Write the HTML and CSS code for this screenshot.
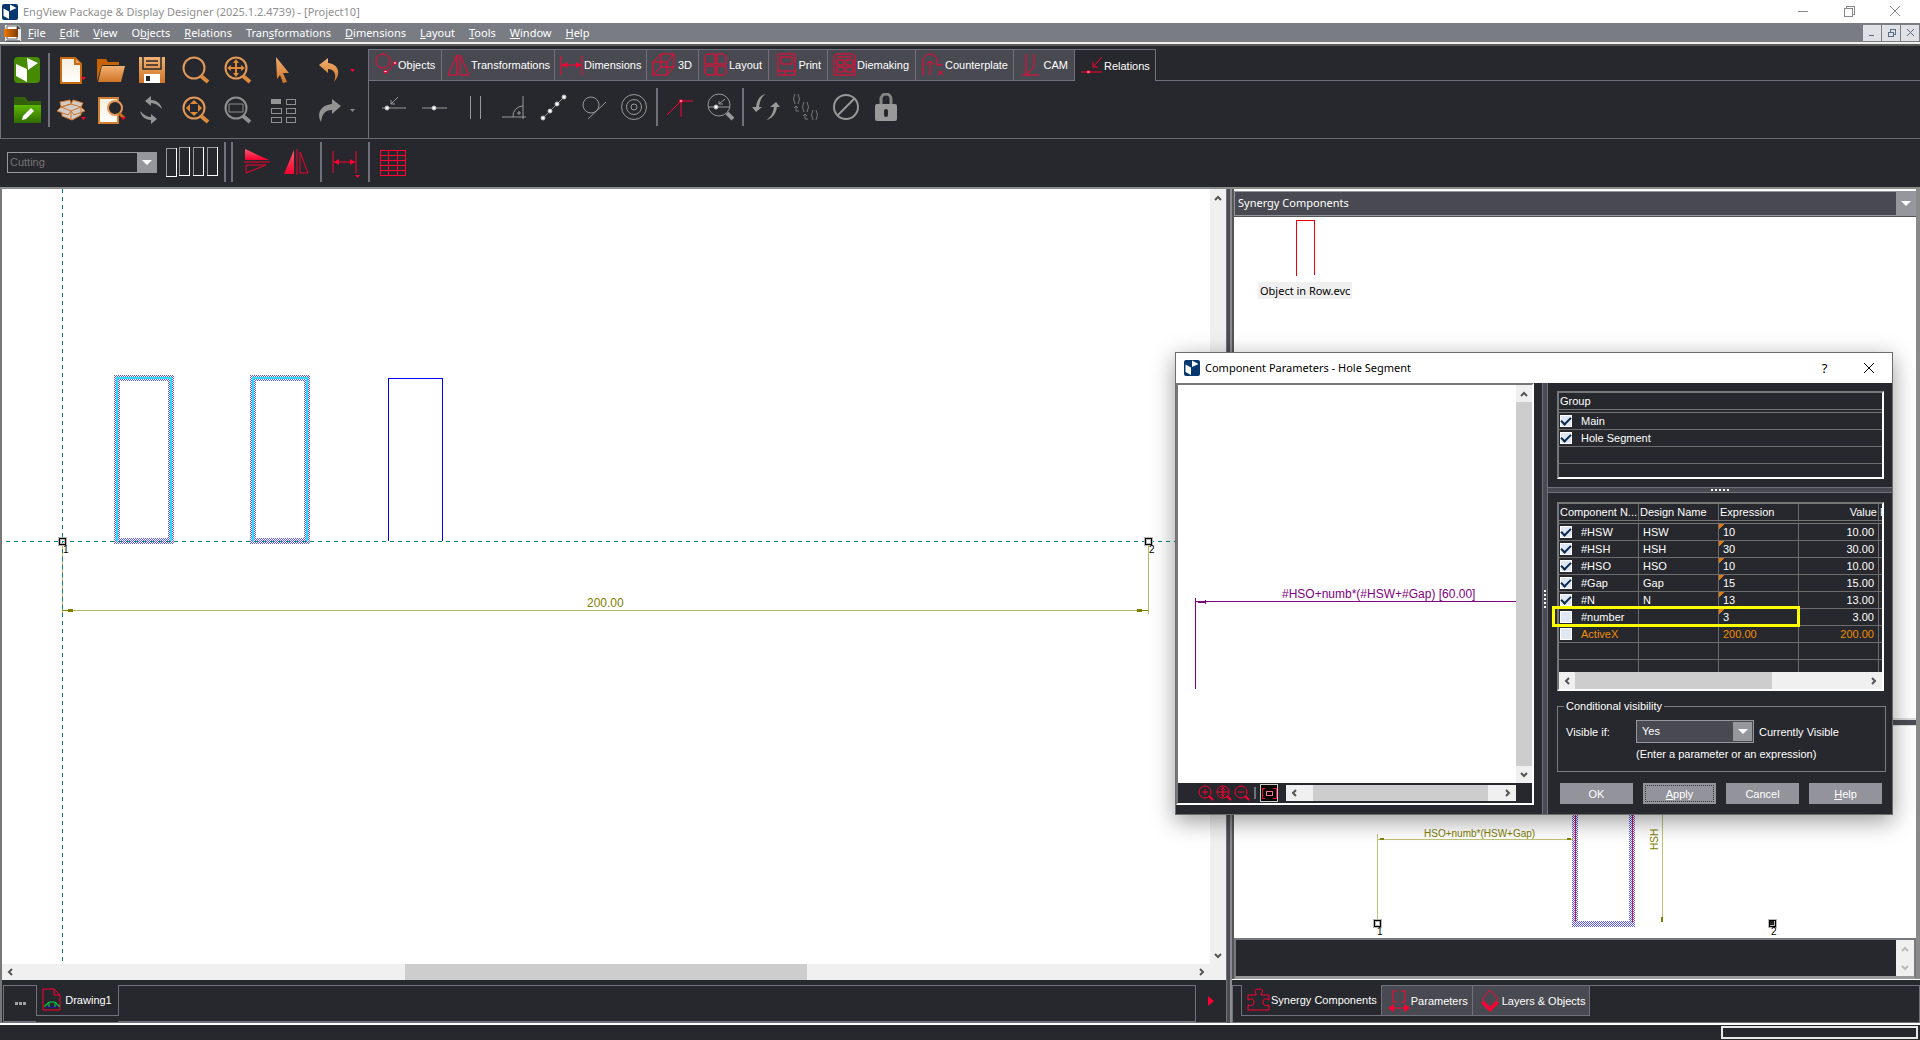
FILE: index.html
```html
<!DOCTYPE html>
<html lang="en">
<head>
<meta charset="utf-8">
<title>EngView Package &amp; Display Designer</title>
<link rel="stylesheet" href="styles.css">
</head>
<body>
<svg class="defs" width="0" height="0" aria-hidden="true">
  <defs>
    <linearGradient id="amber" x1="0" y1="0" x2="0" y2="1"><stop offset="0" stop-color="#f2b173"/><stop offset="1" stop-color="#cf7426"/></linearGradient>
    <linearGradient id="paper" x1="0" y1="0" x2="0" y2="1"><stop offset="0" stop-color="#f8efdd"/><stop offset="1" stop-color="#ffffff"/></linearGradient>
    <linearGradient id="leaf" x1="0" y1="0" x2="0" y2="1"><stop offset="0" stop-color="#5cb800"/><stop offset="1" stop-color="#2f6a00"/></linearGradient>
    <linearGradient id="rose" x1="0" y1="0" x2="0" y2="1"><stop offset="0" stop-color="#ff5a70"/><stop offset="1" stop-color="#f5002f"/></linearGradient>
    <linearGradient id="flag" x1="0" y1="0" x2="1" y2="0"><stop offset="0" stop-color="#f07800"/><stop offset="1" stop-color="#7a3c00"/></linearGradient>
    <pattern id="hatch" width="2" height="2" patternUnits="userSpaceOnUse"><rect width="1" height="1" fill="#5a5ae6"/><rect x="1" y="1" width="1" height="1" fill="#5a5ae6"/></pattern>
    <symbol id="cube" viewBox="0 0 16 16"><path fill="#fff" d="M1.500 4.500 7 7.500V15L1.500 12ZM8 .500 14.500 4 8 7Z"/></symbol>
    <symbol id="up" viewBox="0 0 8 6"><path class="chev" d="M1 5 4 2 7 5"/></symbol>
    <symbol id="down" viewBox="0 0 8 6"><path class="chev" d="M1 1 4 4 7 1"/></symbol>
    <symbol id="left" viewBox="0 0 6 8"><path class="chev" d="M5 1 2 4 5 7"/></symbol>
    <symbol id="right" viewBox="0 0 6 8"><path class="chev" d="M1 1 4 4 1 7"/></symbol>
  </defs>
</svg>

<header class="titlebar">
  <svg class="logo" viewBox="0 0 16 16"><rect width="16" height="16" rx="2" fill="#06386f"/><use href="#cube"/></svg>
  <h1>EngView Package &amp; Display Designer (2025.1.2.4739) - [Project10]</h1>
  <div class="win-buttons">
    <button aria-label="Minimize"><svg width="11" height="11"><path d="M0 5H10"/></svg></button>
    <button aria-label="Restore"><svg width="11" height="11"><path d="M0 2H8V10H0ZM2 2V0H10V8H8"/></svg></button>
    <button aria-label="Close"><svg class="smooth" width="11" height="11"><path d="M0 0 10 10M10 0 0 10"/></svg></button>
  </div>
</header>

<nav class="menubar">
  <svg class="doc" width="18" height="18" viewBox="0 0 18 18"><path d="M1 1H14L17 4V17H1Z" fill="#e8e8e8"/><path d="M3 2H13V15H3Z" fill="#fff" stroke="#666"/><path d="M13 1 17 5H13Z" fill="#444"/><rect y="5" width="14" height="8" fill="url(#flag)"/><path d="M2 17H16" stroke="#333"/></svg>
  <a href="#"><u>F</u>ile</a><a href="#"><u>E</u>dit</a><a href="#"><u>V</u>iew</a><a href="#">O<u>b</u>jects</a><a href="#"><u>R</u>elations</a><a href="#">Tran<u>s</u>formations</a><a href="#"><u>D</u>imensions</a><a href="#"><u>L</u>ayout</a><a href="#"><u>T</u>ools</a><a href="#"><u>W</u>indow</a><a href="#"><u>H</u>elp</a>
  <div class="mdi-buttons">
    <button aria-label="Minimize document"><svg width="9" height="9"><path d="M1 7H6"/></svg></button>
    <button aria-label="Restore document"><svg width="9" height="9"><path d="M1 4H6V8H1ZM3 4V1H8V6H6"/></svg></button>
    <button aria-label="Close document"><svg class="smooth" width="9" height="9"><path d="M1 1 8 8M8 1 1 8"/></svg></button>
  </div>
</nav>

<section class="ribbon">
  <div class="quick">
    <button aria-label="EngView home"><svg class="ic" viewBox="0 0 28 28"><rect x="1" y="1" width="26" height="26" rx="4" fill="#458a00"/><path fill="#fff" d="M3 8 14 13V26L3 20ZM14 2 25 7 15 14Z"/></svg></button>
    <i class="vsep tall"></i>
    <button aria-label="New"><svg class="ic" viewBox="0 0 28 28"><path d="M4 2H18L24 8V27H4Z" fill="url(#paper)" stroke="#c96a10" stroke-width="2"/><path d="M18 2V8H24" fill="#e9a45f" stroke="#c96a10" stroke-width="2"/></svg><svg class="tri" viewBox="0 0 5 3"><path d="M0 0H5L2.500 3Z"/></svg></button>
    <button aria-label="Open"><svg class="ic" viewBox="0 0 28 28"><path d="M0 3H9L11 6H22V9H5L0 25Z" fill="#c86400"/><path d="M5 10H28L24 26H1Z" fill="url(#amber)"/></svg></button>
    <button aria-label="Save"><svg class="ic" viewBox="0 0 28 28"><path d="M1 1H27V27H1Z" fill="url(#amber)"/><path d="M5 0V13H23V0M8 5H20M8 9H20" fill="none" stroke="#27282d" stroke-width="1.500"/><path d="M6 18H22V27H6Z" fill="#fff"/><path d="M8 20H12V25H8Z" fill="#27282d"/></svg></button>
    <button aria-label="Zoom window"><svg class="ic" viewBox="0 0 28 28"><circle cx="12" cy="12" r="10.500" fill="none" stroke="#e3995a" stroke-width="2"/><path d="M19 20 26 26" stroke="#dd8a3c" stroke-width="4"/></svg></button>
    <button aria-label="Pan"><svg class="ic" viewBox="0 0 28 28"><circle cx="12" cy="12" r="10.500" fill="none" stroke="#e3995a" stroke-width="2"/><path d="M19 20 26 26" stroke="#dd8a3c" stroke-width="4"/><path d="M12 7V17M7 12H17" stroke="#e08a38" stroke-width="2"/><path fill="#e08a38" d="M12 3 15 7H9ZM12 21 15 17H9ZM3 12 7 9V15ZM21 12 17 9V15Z"/></svg></button>
    <button aria-label="Select"><svg class="ic" viewBox="0 0 28 28"><path d="M7 1 20 17 14 17 18 26 14 27 11 19 8 23Z" fill="url(#amber)"/></svg></button>
    <button aria-label="Undo"><svg class="ic" viewBox="0 0 28 28"><path d="M3 9 12 2V7C22 8 26 17 18 26 21 18 18 13 12 13V17Z" fill="url(#amber)"/></svg></button>
    <svg class="tri side" viewBox="0 0 5 3"><path d="M0 0H5L2.500 3Z"/></svg>

    <button aria-label="Open project"><svg class="ic" viewBox="0 0 28 28"><path d="M1 1H12L15 5H28V27H1Z" fill="#33600a"/><path d="M1 9H28V27H1Z" fill="url(#leaf)"/><path d="M9 24 10 20 18 12 21 15 13 23Z" fill="#fff"/></svg></button>
    <button aria-label="Box library"><svg class="ic" viewBox="0 0 28 28"><path d="M4 11 14 8 24 11V19L15 24 5 20Z" fill="#cfcbc6"/><path d="M4 11 14 15 24 11 28 15 17 19 14 15 11 19 0 15ZM4 11 3 6 13 4 14 8ZM24 11 26 7 16 4 14 8M4 11 14 8 24 11V19L15 24 5 20V17M14 15V24" fill="#cfcbc6" stroke="#d0752a"/></svg><svg class="tri" viewBox="0 0 5 3"><path d="M0 0H5L2.500 3Z"/></svg></button>
    <button aria-label="Print preview"><svg class="ic" viewBox="0 0 28 28"><path d="M2 2H21V27H2Z" fill="url(#paper)" stroke="#d08030" stroke-width="2"/><circle cx="18" cy="12" r="7" fill="#27282d" stroke="#e3995a" stroke-width="2"/><path d="M22 17 27 22" stroke="#c87020" stroke-width="3"/></svg><svg class="tri" viewBox="0 0 5 3"><path d="M0 0H5L2.500 3Z"/></svg></button>
    <button aria-label="Rebuild"><svg class="ic" viewBox="0 0 28 28"><path fill="#959595" d="M7 5 13 0V4C19 4 23 8 24 13 20 9 17 7 13 7V10ZM19 23 13 28V24C7 24 3 20 2 15 6 19 9 21 13 21V18Z"/></svg></button>
    <button aria-label="Fit all"><svg class="ic" viewBox="0 0 28 28"><circle cx="12" cy="12" r="10.500" fill="none" stroke="#e3995a" stroke-width="2"/><path d="M19 20 26 26" stroke="#dd8a3c" stroke-width="4"/><path fill="#e08a38" d="M12 4 16 8H8ZM12 20 16 16H8ZM4 12 8 8V16ZM20 12 16 8V16Z"/></svg></button>
    <button aria-label="Fit selection"><svg class="ic" viewBox="0 0 28 28"><circle cx="12" cy="12" r="10.500" fill="none" stroke="#8f8f8f" stroke-width="2"/><path d="M19 20 26 26" stroke="#8f8f8f" stroke-width="4"/><path d="M5 8H19V16H5Z" fill="none" stroke="#8f8f8f"/></svg></button>
    <button aria-label="Multiple view"><svg class="ic crisp" viewBox="0 0 28 28"><path d="M2 3H12V8H2Z" fill="#959595"/><path d="M17 3H26V8H17ZM2 12H12V17H2ZM17 12H26V17H17ZM2 21H12V26H2ZM17 21H26V26H17Z" fill="none" stroke="#8f8f8f"/></svg></button>
    <button aria-label="Redo"><svg class="ic" viewBox="0 0 28 28"><path d="M25 10 16 3V8C6 9 0 16 5 26 6 18 9 14 16 14V18Z" fill="#939393"/></svg></button>
    <svg class="tri side grey" viewBox="0 0 5 3"><path d="M0 0H5L2.500 3Z"/></svg>
  </div>

  <div class="tabs-area">
    <div class="tabs">
      <button><svg viewBox="0 0 24 24"><circle cx="9" cy="8" r="7"/><path d="M11 21 21 10"/><path class="dot" d="M10 17.500h3v2h-3ZM19.500 9h3v2h-3Z"/></svg>Objects</button>
      <button><svg viewBox="0 0 24 24"><path d="M10 2V22H1ZM13 2V22H22Z"/></svg>Transformations</button>
      <button><svg viewBox="0 0 24 24"><path d="M1 3V22M22 3V22M2 12H21"/><path class="fill" d="M2 12 7 9V15ZM21 12 16 9V15Z"/></svg>Dimensions</button>
      <button><svg viewBox="0 0 24 24"><path d="M1 9H15V22H1ZM1 9 9 1H22V14L15 22M15 9 22 1M9 1V14L1 22M9 14H22"/></svg>3D</button>
      <button><svg viewBox="0 0 24 24"><path d="M3 1H11V11H1V3ZM13 1H20L22 3V11H13ZM1 13H11V22H3L1 20ZM13 13H22V20L20 22H13Z"/></svg>Layout</button>
      <button><svg viewBox="0 0 24 24"><path d="M4 1H21V22H4ZM7 4H18V11H7ZM4 18H21M11 18V22"/></svg>Print</button>
      <button><svg viewBox="0 0 24 24"><path d="M3 1H20L22 3V22H1V3ZM4 4H19M4 7H11V12H4ZM13 7H20V12H13ZM4 14H11V19H4ZM13 14H20V19H13Z"/></svg>Diemaking</button>
      <button><svg viewBox="0 0 24 24"><path d="M2 22V8A7 7 0 0 1 16 8V12H22M9 22V8M5 12 9 8 13 12M17 18 22 22M22 18 17 22"/></svg>Counterplate</button>
      <button><svg viewBox="0 0 24 24"><path d="M7 1V22M15 1V14L7 22M3 22H20"/></svg>CAM</button>
      <button class="current"><svg viewBox="0 0 24 24"><path d="M1 18H22M22 3 13 13M13 8V13H18"/><path class="dot" d="M7 17h3v2h-3Z"/></svg>Relations</button>
      <span></span>
    </div>
    <div class="tools">
      <button aria-label="Point on object"><svg class="ic line" viewBox="0 0 28 28"><path d="M2 15H26M18 4 11 11M11 7V11H15"/><circle class="pt" cx="7" cy="15" r="2"/></svg></button>
      <button aria-label="Midpoint"><svg class="ic line" viewBox="0 0 28 28"><path d="M2 15H27"/><circle class="pt" cx="14" cy="15" r="2"/></svg></button>
      <button aria-label="Parallel"><svg class="ic line crisp" viewBox="0 0 28 28"><path d="M10 3V26M20 3V26"/></svg></button>
      <button aria-label="Perpendicular"><svg class="ic line" viewBox="0 0 28 28"><path d="M2 24H26M23 3V26M13 24A10 10 0 0 1 23 13M18 19H20V21H18Z"/></svg></button>
      <button aria-label="Collinear"><svg class="ic line" viewBox="0 0 28 28"><path d="M3 25 24 4"/><circle class="pt" cx="3" cy="25" r="2"/><circle class="pt" cx="10" cy="18" r="2"/><circle class="pt" cx="17" cy="11" r="2"/><circle class="pt" cx="24" cy="4" r="2"/></svg></button>
      <button aria-label="Tangent"><svg class="ic line" viewBox="0 0 28 28"><circle cx="11" cy="12" r="8"/><path d="M8 26 26 9"/></svg></button>
      <button aria-label="Concentric"><svg class="ic line" viewBox="0 0 28 28"><circle cx="14" cy="14" r="12.500"/><circle cx="14" cy="14" r="7.500"/><circle cx="14" cy="14" r="3"/></svg></button>
      <i class="vsep"></i>
      <button aria-label="Show relations"><svg class="ic line red" viewBox="0 0 28 28"><path d="M15 8H27M15 8 1 22M15 8V24"/><path class="dot" d="M13.500 7h3v2h-3Z"/></svg></button>
      <button aria-label="Inspect relation"><svg class="ic line" viewBox="0 0 28 28"><circle cx="13" cy="12" r="11"/><path d="M2 14H24M19 6 13 11M13 8V11H17"/><circle class="pt" cx="10" cy="14" r="2"/><path d="M21 20 27 26" stroke-width="4"/></svg></button>
      <i class="vsep"></i>
      <button aria-label="Reverse"><svg class="ic" viewBox="0 0 28 28"><path fill="#999" d="M14 1C8 2 5 7 4 14H0L4 19 10 14H7C8 7 10 3 14 1ZM14 27C20 26 24 21 25 14H28L24 9 18 14H22C21 21 18 25 14 27Z"/></svg></button>
      <button aria-label="Chained parameters"><svg class="ic line dim" viewBox="0 0 28 28"><path d="M3 1Q0 6 3 11M6 1Q9 6 6 11M12 9Q9 14 12 19M15 9Q18 14 15 19M21 17Q18 22 21 27M24 17Q27 22 24 27M4 13V18H7M2 15 4 13 6 15M13 21V26H16M11 23 13 21 15 23"/></svg></button>
      <button aria-label="Disable"><svg class="ic line" viewBox="0 0 28 28"><circle cx="14" cy="14" r="12" stroke-width="2"/><path d="M6 22 22 6" stroke-width="2"/></svg></button>
      <button aria-label="Lock"><svg class="ic" viewBox="0 0 28 28"><path d="M9 12V6A5 5 0 0 1 19 6V12" fill="none" stroke="#858585" stroke-width="3"/><rect x="3" y="11" width="22" height="17" rx="2" fill="#999"/><rect x="12" y="16" width="4" height="8" rx="2" fill="#27282d"/></svg></button>
    </div>
  </div>
</section>

<section class="subbar">
  <label class="combo style-combo"><select aria-label="Line style" disabled><option>Cutting</option></select><span class="drop"><svg width="10" height="5"><path d="M0 0H10L5 5Z"/></svg></span></label>
  <svg class="swatches crisp" width="54" height="32"><path d="M1 30V2H11M14 29V1H24M28 29V1H38M42 29V1H52" stroke="#999"/><path d="M11 2V30H1M24 1V29H14M38 1V29H28M52 1V29H42" stroke="#fff"/></svg>
  <i class="vsep"></i><i class="vsep"></i>
  <button aria-label="Flip vertical"><svg class="ic" viewBox="0 0 28 28"><path d="M2 1 26 12H2Z" fill="url(#rose)"/><path d="M1 14H27M3 17H23L3 25Z" fill="none" stroke="#f5002f"/></svg></button>
  <button aria-label="Flip horizontal"><svg class="ic" viewBox="0 0 28 28"><path d="M11 2V26H1Z" fill="url(#rose)"/><path d="M14 1V27M17 4V25H25Z" fill="none" stroke="#f5002f"/></svg></button>
  <i class="vsep"></i>
  <button aria-label="Dimension"><svg class="ic line red" viewBox="0 0 28 28"><path d="M2 3V25M25 3V25M3 14H24"/><path class="fill" d="M3 14 8 11V17ZM24 14 19 11V17Z"/></svg><svg class="tri" viewBox="0 0 5 3"><path d="M0 0H5L2.500 3Z"/></svg></button>
  <i class="vsep"></i>
  <button aria-label="Table"><svg class="ic line red crisp" viewBox="0 0 28 28"><path d="M1 2H26V27H1ZM9 2V27M18 2V27M1 7H26M1 12H26M1 17H26M1 22H26"/></svg></button>
</section>

<main class="workspace">
  <section class="drawing">
    <div class="canvas">
      <svg class="crisp" width="100%" height="100%">
        <g fill="none">
          <path d="M115 189H169V352H115ZM251 189H305V352H251Z" stroke="url(#hatch)" stroke-width="6"/>
          <path d="M115 352V189H169V352M251 352V189H305V352" stroke="#2fdcff" stroke-width="2"/>
          <path d="M386 352V189H440V352" stroke="#0000ff"/>
          <g stroke="#b5b868"><path d="M60 357V425M60 421H1146M1146 357V425"/></g>
          <g stroke="#0a8080" stroke-dasharray="4 4"><line x1="60" y1="0" x2="60" y2="100%"/><line x1="4" y1="352" x2="100%" y2="352"/></g>
          <path d="M57 349H63V355H57ZM1143 349H1149V355H1143Z" stroke="#b8b8b8" stroke-width="3"/>
          <path d="M57 349H63V355H57ZM1143 349H1149V355H1143Z" stroke="#000"/>
        </g>
        <path fill="#808000" d="M60 421h6v-1h5v3h-5v-1h-6ZM1146 421h-6v-1h-5v3h5v-1h6Z"/>
        <text x="585" y="418" class="olive">200.00</text>
        <text x="61" y="364" class="pin">1</text><text x="1147" y="364" class="pin">2</text>
      </svg>
    </div>
    <div class="scroll-v"><button aria-label="Scroll up"><svg width="8" height="6"><use href="#up"/></svg></button><div class="track"></div><button aria-label="Scroll down"><svg width="8" height="6"><use href="#down"/></svg></button></div>
    <div class="scroll-h"><button aria-label="Scroll left"><svg width="6" height="8"><use href="#left"/></svg></button><div class="track sheet-track"><i></i></div><button aria-label="Scroll right"><svg width="6" height="8"><use href="#right"/></svg></button></div>
    <div class="sheets">
      <button class="more" aria-label="More drawings"><svg width="11" height="3"><path d="M0 0h3v3H0ZM4 0h3v3H4ZM8 0h3v3H8Z" fill="#a0a0a0"/></svg></button>
      <button class="sheet"><svg width="18" height="22" viewBox="0 0 18 22"><path d="M0 0H11L17 6V21H0ZM11 0V6H17" fill="none" stroke="#ff0033"/><path d="M3 18H15" stroke="#3300cc"/><path d="M2 18V16H4Q4 13 7 13H11Q14 13 14 16H16V18M6 18V14M12 18V14" fill="none" stroke="#00e040"/></svg>Drawing1</button>
      <span class="rest"></span>
      <button class="next" aria-label="Next drawing"><svg width="6" height="10"><path d="M0 0 6 5 0 10Z" fill="#ff0033"/></svg></button>
    </div>
  </section>
  <div class="splitter"></div>
  <aside class="dock">
    <div class="dock-body">
      <div class="combo dock-head"><span>Synergy Components</span><button class="drop" aria-label="Choose library"><svg width="10" height="5"><path d="M0 0H10L5 5Z"/></svg></button></div>
      <div class="library">
        <figure><svg class="crisp" width="20" height="58"><path d="M1 57V1H19V56" fill="none" stroke="#f00000"/></svg><figcaption>Object in Row.evc</figcaption></figure>
      </div>
      <div class="hsplit"></div>
      <div class="preview">
        <svg class="crisp" width="100%" height="100%">
          <g fill="none">
            <path d="M341 0V198H398V0" stroke="url(#hatch)" stroke-width="6"/>
            <path d="M341 0V196M398 0V196" stroke="#e01040"/>
            <path d="M143 108V193M143 113H340M428 20V196" stroke="#c0c278"/>
            <path d="M140 194H146V200H140ZM535 194H541V200H535Z" stroke="#b8b8b8" stroke-width="3"/>
            <path d="M140 194H146V200H140ZM535 194H541V200H535Z" stroke="#000"/>
          </g>
          <path fill="#808000" d="M146 112h4v2h-4ZM333 112h4v2h-4ZM427 191h2v5h-2Z"/>
          <path fill="#222" d="M536 195h4v4h-4Z"/>
          <text x="190" y="111" class="olive small">HSO+numb*(HSW+Gap)</text>
          <text transform="translate(424 124) rotate(-90)" class="olive small">HSH</text>
          <text x="143" y="209" class="pin">1</text><text x="537" y="209" class="pin">2</text>
        </svg>
      </div>
      <div class="notes"><textarea aria-label="Component notes" readonly></textarea><div class="scroll-v idle"><button aria-label="Scroll up" disabled><svg width="8" height="6"><use href="#up"/></svg></button><div class="track"></div><button aria-label="Scroll down" disabled><svg width="8" height="6"><use href="#down"/></svg></button></div></div>
    </div>
    <div class="dock-tabs">
      <span class="lead"></span>
      <button class="current"><svg viewBox="0 0 22 22"><path d="M0 6H8V5Q5 0 11 0T13 5V6H21V11Q15 8 15 13T21 16V21H0V16Q6 18 6 13T0 11Z"/></svg>Synergy Components</button>
      <button><svg viewBox="0 0 22 22"><path d="M9 1H5V12H9M13 1H17V12H13M2 18H20"/><path class="fill" d="M0 18 6 14V22ZM22 18 16 14V22Z"/></svg>Parameters</button>
      <button><svg viewBox="0 0 22 22"><path d="M11 0 19 9 11 17 3 9Z"/><path d="M3 12 11 20 19 12" stroke-width="3"/></svg>Layers &amp; Objects</button>
      <span class="rest"></span>
    </div>
  </aside>
</main>

<footer class="status"><span class="panel"></span></footer>

<div class="dialog" role="dialog" aria-labelledby="dlg-title">
  <header>
    <svg class="logo" viewBox="0 0 16 16"><rect width="16" height="16" rx="2" fill="#06386f"/><use href="#cube"/></svg>
    <h2 id="dlg-title">Component Parameters - Hole Segment</h2>
    <button aria-label="Help on dialog">?</button>
    <button aria-label="Close dialog"><svg width="11" height="11"><path d="M0 0 10 10M10 0 0 10"/></svg></button>
  </header>
  <div class="dlg-body">
    <div class="viewer">
      <div class="view">
        <svg class="crisp" width="100%" height="100%">
          <path d="M17 213V304M17 216H338" fill="none" stroke="#800080"/>
          <path d="M20 217H27M27 215V219" fill="none" stroke="#800080"/>
          <text x="104" y="213" class="purple">#HSO+numb*(#HSW+#Gap) [60.00]</text>
        </svg>
      </div>
      <div class="scroll-v"><button aria-label="Scroll up"><svg width="8" height="6"><use href="#up"/></svg></button><div class="track full"><i></i></div><button aria-label="Scroll down"><svg width="8" height="6"><use href="#down"/></svg></button></div>
      <div class="view-tools">
        <button aria-label="Zoom in"><svg viewBox="0 0 16 16"><circle cx="7" cy="7" r="6"/><path d="M4 7H10M7 4V10"/><path d="M11 11 15 15" stroke-width="2"/></svg></button>
        <button aria-label="Pan"><svg viewBox="0 0 16 16"><circle cx="7" cy="7" r="6"/><path d="M2 7H12M7 2V12M5 5 7 3 9 5M5 9 7 11 9 9"/><path d="M11 11 15 15" stroke-width="2"/></svg></button>
        <button aria-label="Zoom out"><svg viewBox="0 0 16 16"><circle cx="7" cy="7" r="6"/><path d="M4 7H10"/><path d="M11 11 15 15" stroke-width="2"/></svg></button>
        <i class="vsep"></i>
        <button class="pressed" aria-label="Fit"><svg class="crisp" viewBox="0 0 16 16"><path d="M4 3H1V13H4M12 3H15V13H12"/><path d="M5 6H11V10H5Z" stroke="#ff7088"/></svg></button>
      </div>
      <div class="scroll-h"><button aria-label="Scroll left"><svg width="6" height="8"><use href="#left"/></svg></button><div class="track view-track"><i></i></div><button aria-label="Scroll right"><svg width="6" height="8"><use href="#right"/></svg></button></div>
    </div>
    <div class="grip-v"><i></i></div>
    <div class="props">
      <div class="grid-box groups">
        <table>
          <thead><tr><th>Group</th></tr></thead>
          <tbody>
            <tr><td><label><input type="checkbox" checked>Main</label></td></tr>
            <tr><td><label><input type="checkbox" checked>Hole Segment</label></td></tr>
            <tr><td></td></tr><tr><td></td></tr>
          </tbody>
        </table>
      </div>
      <div class="grip-h"><i></i></div>
      <div class="params-wrap">
        <div class="grid-box params">
          <table>
            <thead><tr><th>Component N...</th><th>Design Name</th><th>Expression</th><th class="num">Value</th><th>F</th></tr></thead>
            <tbody>
              <tr><td><label><input type="checkbox" checked>#HSW</label></td><td>HSW</td><td class="ex">10</td><td class="num">10.00</td><td></td></tr>
              <tr><td><label><input type="checkbox" checked>#HSH</label></td><td>HSH</td><td class="ex">30</td><td class="num">30.00</td><td></td></tr>
              <tr><td><label><input type="checkbox" checked>#HSO</label></td><td>HSO</td><td class="ex">10</td><td class="num">10.00</td><td></td></tr>
              <tr><td><label><input type="checkbox" checked>#Gap</label></td><td>Gap</td><td class="ex">15</td><td class="num">15.00</td><td></td></tr>
              <tr><td><label><input type="checkbox" checked>#N</label></td><td>N</td><td class="ex">13</td><td class="num">13.00</td><td></td></tr>
              <tr><td><label><input type="checkbox">#number</label></td><td></td><td class="ex">3</td><td class="num">3.00</td><td></td></tr>
              <tr class="active"><td><label><input type="checkbox">ActiveX</label></td><td></td><td>200.00</td><td class="num">200.00</td><td></td></tr>
              <tr><td></td><td></td><td></td><td></td><td></td></tr>
              <tr><td></td><td></td><td></td><td></td><td></td></tr>
            </tbody>
          </table>
          <div class="scroll-h"><button aria-label="Scroll left"><svg width="6" height="8"><use href="#left"/></svg></button><div class="track param-track"><i></i></div><button aria-label="Scroll right"><svg width="6" height="8"><use href="#right"/></svg></button></div>
        </div>
        <div class="marker"></div>
      </div>
      <fieldset>
        <legend>Conditional visibility</legend>
        <label for="visible">Visible if:</label>
        <div class="combo"><select id="visible"><option>Yes</option></select><span class="drop"><svg width="10" height="5"><path d="M0 0H10L5 5Z"/></svg></span></div>
        <span>Currently Visible</span>
        <p>(Enter a parameter or an expression)</p>
      </fieldset>
      <div class="actions">
        <button>OK</button><button class="focus"><u>A</u>pply</button><button>Cancel</button><button><u>H</u>elp</button>
      </div>
    </div>
  </div>
</div>
</body>
</html>
```
FILE: styles.css
```css
:root {
  --bg: #27282d;
  --panel: #494a51;
  --line: #70717d;
  --grey: #96979d;
  --red: #ff0033;
  --ui: "Liberation Sans", Arial, sans-serif;
  --title: "Noto Sans", "Open Sans", sans-serif;
}
* { box-sizing: border-box; }
body {
  margin: 0;
  min-height: 100vh;
  display: flex;
  flex-direction: column;
  position: relative;
  background: var(--bg);
  color: #fff;
  font: 11px/14px var(--ui);
  overflow-x: hidden;
}
button { margin: 0; padding: 0; border: 0; background: none; color: inherit; font: inherit; display: flex; align-items: center; justify-content: center; }
h1, h2, p, figure { margin: 0; font: inherit; }
.defs { position: absolute; }
.crisp { shape-rendering: crispEdges; }
.logo { width: 16px; height: 16px; flex: none; }
.chev { fill: none; stroke: currentColor; stroke-width: 2; }

/* window frame */
.titlebar { display: flex; align-items: center; height: 23px; padding-left: 2px; background: #fff; color: #8f8f8f; font: 11px/16px var(--title); }
.titlebar h1 { flex: 1; padding-left: 5px; }
.win-buttons { display: flex; padding-right: 2px; }
.win-buttons button { width: 46px; height: 20px; }
.win-buttons path, .mdi-buttons path { fill: none; stroke: #888; shape-rendering: crispEdges; }
.win-buttons .smooth path, .mdi-buttons .smooth path { shape-rendering: auto; }
.menubar { display: flex; align-items: center; height: 23px; gap: 14px; padding-left: 4px; background: #797c83; border-bottom: 2px solid #5c5c5c; box-shadow: inset 0 -2px #f0f0f0; padding-bottom: 2px; font: 11px/16px var(--title); }
.menubar .doc { margin-right: -8px; }
.menubar a { color: #fff; text-decoration: none; }
.mdi-buttons { display: flex; margin-left: auto; gap: 1px; padding-right: 1px; }
.mdi-buttons button { width: 18px; height: 16px; background: #dfe1e6; }
.mdi-buttons path { stroke: #5a6b85; }

/* toolbars */
.ic { width: 28px; height: 28px; }
.ribbon { display: flex; height: 93px; border-left: 1px solid var(--line); border-bottom: 1px solid #6b6b6b; }
.ribbon button, .subbar button { position: relative; }
.quick { display: grid; grid-template-columns: 40px 4px 40px 40px 41px 48px 35px 55px 40px 18px; grid-template-rows: 40px 40px; padding: 4px 0 0 6px; align-items: center; }
.vsep { width: 2px; height: 38px; background: var(--line); flex: none; }
.vsep.tall { grid-row: 1 / 3; grid-column: 2; height: 74px; justify-self: center; }
.tri { position: absolute; right: 5px; bottom: 4px; width: 5px; height: 3px; fill: var(--red); }
.tri.side { position: static; }
.tri.grey { fill: #888; }
.tabs-area { flex: 1; padding-top: 3px; display: flex; flex-direction: column; }
.tabs { display: grid; height: 32px; grid-template-columns: 73px 113px 92px 52px 70px 59px 88px 98px 61px 82px 1fr; }
.tabs button { justify-content: space-between; padding: 0 6px 0 5px; background: var(--panel); border: 1px solid var(--line); border-right: 0; }
.tabs button.current { background: none; border-right: 1px solid var(--line); border-bottom: 0; }
.tabs span { border-bottom: 1px solid var(--line); }
.tabs svg, .dock-tabs svg { width: 24px; height: 24px; flex: none; fill: none; stroke: var(--red); overflow: visible; }
.fill { fill: var(--red); stroke: none; }
.dot { fill: #fff; stroke: var(--red); }
.tools { flex: 1; display: flex; align-items: center; padding: 0 0 6px 5px; border-left: 1px solid var(--line); }
.tools button { width: 40px; height: 40px; }
.tools .vsep { margin: 0 2px; }
.line { fill: none; stroke: #989898; }
.line.dim { stroke: #777; }
.line.red { stroke: var(--red); }
.pt { fill: #fff; stroke: #bbb; }
.subbar { display: flex; align-items: center; height: 50px; padding: 0 0 2px 7px; border-bottom: 2px solid #8c8c8c; }
.subbar button { width: 40px; height: 40px; }
.subbar .vsep { height: 40px; margin: 0 5px 0 0; }
.subbar .vsep + button { margin-left: -1px; }
.subbar button + .vsep { margin: 0 4px 0 3px; }
.swatches { margin: 0 5px 0 8px; fill: none; }
.combo { display: flex; border: 1px solid var(--grey); background: var(--panel); }
.combo select { flex: 1; min-width: 0; appearance: none; border: 0; padding: 0 4px 2px; background: none; color: #fff; font: inherit; opacity: 1; }
.combo .drop { display: flex; align-items: center; justify-content: center; width: 19px; background: var(--grey); }
.drop path { fill: #fff; }
.style-combo { width: 150px; height: 21px; background: var(--bg); }
.style-combo select { color: #737373; padding: 0 2px; }

/* work area */
.workspace { flex: 1; display: grid; grid-template-columns: minmax(0, 1fr) 6px 688px; border-bottom: 2px solid #fff; }
.drawing { display: grid; grid-template-columns: minmax(0, 1fr) 16px; grid-template-rows: minmax(0, 1fr) 16px 43px; border-left: 2px solid #777; }
.canvas, .view, .preview { position: relative; background: #fff; overflow: hidden; }
.canvas > svg, .view > svg, .preview > svg { position: absolute; inset: 0; }
.scroll-v, .scroll-h { display: flex; background: #f0f0f0; color: #555; }
.scroll-v { flex-direction: column; }
.scroll-v button { height: 17px; }
.scroll-h button { width: 16px; }
.track { flex: 1; display: flex; }
.track i { background: #cdcdcd; }
.drawing .scroll-h { grid-column: 1 / 3; padding-right: 16px; }
.sheet-track { padding: 0 32%; }
.sheet-track i { flex: 1; }
.sheets { grid-column: 1 / 3; display: flex; padding: 5px 0 0 1px; box-shadow: inset 0 -1px var(--line); }
.sheets .more { width: 33px; height: 37px; border: 1px solid var(--line); border-right: 0; }
.sheets .sheet { width: 83px; height: 31px; gap: 4px; border: 1px solid var(--line); border-top: 0; }
.sheets .sheet svg { overflow: visible; }
.sheets .rest { flex: 1; height: 37px; border: 1px solid var(--line); border-left: 0; margin-left: -1px; }
.sheets .next { width: 30px; height: 32px; }
.splitter { background: #4b4b54; border-right: 2px solid #8c8c90; border-left: 1px solid var(--line); }
.dock { display: grid; grid-template-rows: minmax(0, 1fr) 44px; background: var(--bg); }
.dock-body { display: grid; grid-template-rows: 25px minmax(0, 1fr) 8px 212px 41px; padding-top: 2px; background: #fff; border-left: 2px solid #555; border-right: 4px solid #8a8a8a; min-height: 0; }
.dock-head { align-items: stretch; }
.dock-head span { flex: 1; padding: 2px 3px; font: 11px/18px var(--title); }
.library { border-top: 1px solid #555; padding: 2px 0 0 24px; color: #000; font: 11px/17px var(--title); }
.library figure { display: inline-flex; flex-direction: column; align-items: center; gap: 5px; }
.library figcaption { padding: 0 2px; background: #f0f0f0; }
.hsplit { background: #4b4b54; border: solid #ddd; border-width: 2px 0 1px; }
.notes { display: flex; border: 2px solid #77787f; border-bottom: 3px solid #999; }
.notes textarea { flex: 1; resize: none; border: 0; background: var(--bg); color: #fff; }
.notes .scroll-v { width: 18px; justify-content: space-between; }
.scroll-v.idle { color: #bbb; }
.dock-tabs { display: flex; padding-top: 5px; box-shadow: inset 0 -1px var(--line); border-top: 1px solid #fff; }
.dock-tabs .lead { width: 9px; height: 38px; border: 1px solid var(--line); border-right: 0; }
.dock-tabs button { height: 31px; padding: 0 4px 0 6px; gap: 1px; background: var(--panel); border: 1px solid var(--line); border-right: 0; }
.dock-tabs button.current { background: none; border-top: 0; }
.dock-tabs .rest { flex: 1; height: 38px; border: 1px solid var(--line); border-width: 1px 1px 0 0; position: relative; }
.dock-tabs button:nth-last-child(2) { border-right: 1px solid var(--line); }
.dock-tabs svg { width: 22px; height: 22px; }
.status { display: flex; justify-content: flex-end; height: 15px; padding: 1px 2px; }
.status .panel { width: 197px; border: 2px solid #e8e8e8; }
.olive { fill: #808000; font: 12px var(--ui); }
.olive.small { font-size: 10px; }
.purple { fill: #800080; font: 12px var(--ui); }
.pin { fill: #000; font: 10px var(--ui); }

/* floating dialog */
.dialog { position: absolute; left: 1175px; top: 352px; width: 718px; background: var(--bg); border: 1px solid #6e6e6e; box-shadow: 0 6px 22px rgba(0, 0, 0, .4); }
.dialog header { display: flex; align-items: center; height: 30px; padding-left: 8px; background: #fff; color: #000; font: 11px/16px var(--title); }
.dialog header h2 { flex: 1; padding-left: 5px; }
.dialog header button { width: 45px; height: 28px; font-size: 13px; }
.dialog header path { fill: none; stroke: #000; }
.dlg-body { display: grid; grid-template-columns: 358px 8px 6px minmax(0, 1fr); }
.viewer { display: grid; grid-template-columns: 108px minmax(0, 1fr) 16px; grid-template-rows: 398px 20px; border: 2px solid #777; border-right-color: #fff; border-bottom-color: #fff; margin-bottom: 9px; }
.view { grid-column: 1 / 3; }
.full i { flex: 1; }
.viewer .scroll-h { margin: 2px 0; }
.view-track { padding: 0 12px 0 11px; }
.view-track i, .param-track i { flex: 1; }
.view-tools { display: flex; align-items: center; justify-content: flex-end; padding-right: 8px; gap: 2px; }
.view-tools svg { width: 16px; height: 16px; flex: none; fill: none; stroke: var(--red); }
.view-tools .vsep { height: 12px; margin: 0 2px; }
.view-tools .pressed { width: 18px; height: 18px; background: #000; border: 1px solid #ccc; }
.grip-v { grid-column: 3; display: flex; align-items: center; justify-content: center; background: var(--panel); border: solid var(--line); border-width: 0 1px; }
.grip-v i { width: 2px; height: 18px; background: repeating-linear-gradient(#fff 0 2px, transparent 2px 4px); }
.grip-h { display: flex; align-items: center; justify-content: center; height: 6px; margin: 8px 0 9px; background: var(--panel); border: solid var(--line); border-width: 1px 0; }
.grip-h i { width: 18px; height: 2px; background: repeating-linear-gradient(90deg, #fff 0 2px, transparent 2px 4px); }
.props { padding-top: 8px; }
.grid-box { margin: 0 8px 0 9px; border: 2px solid #777; border-right-color: #fff; border-bottom-color: #fff; overflow: hidden; display: flex; flex-direction: column; }
.groups { height: 88px; }
.params { height: 189px; }
.grid-box table { table-layout: fixed; width: 100%; border-collapse: separate; border-spacing: 0; }
.params table { width: 400px; height: 173px; }
.grid-box th { height: 20px; padding: 0 1px; font-weight: normal; text-align: left; border-bottom: 4px double #757575; white-space: nowrap; }
.grid-box td { height: 17px; padding: 0 4px; line-height: 16px; border-bottom: 1px solid #6d6d6d; white-space: nowrap; }
.params th, .params td { border-right: 1px solid #6d6d6d; }
.grid-box .num { text-align: right; }
.grid-box td:first-child { padding-left: 1px; }
.grid-box td.ex { background: linear-gradient(135deg, #e07a10 0 4px, transparent 4px); }
.active { color: #f08c00; }
.grid-box label { display: flex; align-items: center; gap: 9px; height: 16px; }
.grid-box input { appearance: none; width: 12px; height: 12px; margin: 0; background: #dfe7f3; border: 1px solid #fff; display: grid; place-items: center; }
.grid-box input:checked::before { content: ""; width: 8px; height: 4px; margin-bottom: 2px; border: solid #0a2a52; border-width: 0 0 2px 2px; transform: rotate(-45deg); }
.params .scroll-h { flex: none; height: 17px; position: relative; margin-top: -5px; }
.param-track { padding-right: 94px; }
.params-wrap { position: relative; }
.marker { position: absolute; left: 4px; top: 104px; width: 248px; height: 21px; border: 3px solid #ff0; }
fieldset { display: grid; grid-template-columns: 70px 118px 1fr; align-items: center; align-content: start; margin: 8px 6px 0 9px; padding: 7px 0 0 8px; border: 1px solid #7a7b84; height: 73px; row-gap: 4px; }
fieldset legend { padding: 0 2px; margin-left: -2px; }
fieldset .combo { height: 23px; padding: 1px; }
fieldset span { padding-left: 5px; }
fieldset p { grid-column: 2 / 4; }
fieldset .drop { padding: 0; }
.actions { display: grid; grid-template-columns: repeat(4, 73px); justify-content: space-between; padding: 11px 10px 9px 12px; }
.actions button { height: 21px; background: #93939b; }
.actions .focus { outline: 1px dotted #333; outline-offset: -3px; }
```
